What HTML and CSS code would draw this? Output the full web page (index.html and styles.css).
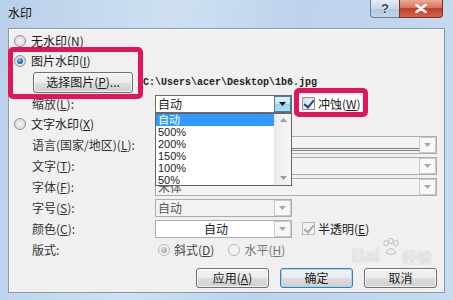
FILE: index.html
```html
<!DOCTYPE html>
<html lang="zh-CN">
<head>
    <meta charset="UTF-8">
    <title>水印</title>
    <link rel="stylesheet" href="styles.css">
</head>
<body>
    <div class="window">
        <div class="titlebar">
            <span class="title">水印</span>
            <div class="caption-buttons">
                <div class="cap-btn help">?</div>
                <div class="cap-btn close">
                    <svg width="12" height="9" viewBox="0 0 12 9"><path d="M1.5 1 L10.5 8 M10.5 1 L1.5 8" stroke="#fff" stroke-width="2.6" stroke-linecap="round"/></svg>
                </div>
            </div>
        </div>

        <div class="client">
            <div class="opt-row">
                <span class="radio"></span>
                <span>无水印(<u>N</u>)</span>
            </div>
            <div class="opt-row">
                <span class="radio checked"></span>
                <span>图片水印(<u>I</u>)</span>
            </div>
            <div class="pic-row">
                <div class="btn pick"><span>选择图片(<u>P</u>)...</span></div>
                <span class="path">C:\Users\acer\Desktop\1b6.jpg</span>
            </div>
            <div class="field-row">
                <span class="label">缩放(<u>L</u>):</span>
                <div class="combo short focus">
                    <span class="combo-text">自动</span>
                    <span class="combo-btn"><svg width="7" height="4" viewBox="0 0 7 4"><path d="M0 0 H7 L3.5 4 Z" fill="#1a1a1a"/></svg></span>
                </div>
                <label class="check washout"><span class="box on"></span><span>冲蚀(<u>W</u>)</span></label>
            </div>
            <div class="opt-row">
                <span class="radio"></span>
                <span>文字水印(<u>X</u>)</span>
            </div>
            <div class="field-row">
                <span class="label">语言(国家/地区)(<u>L</u>):</span>
                <div class="combo long off">
                    <span class="combo-text"><span class="rule"></span></span>
                    <span class="combo-btn"><svg width="7" height="4" viewBox="0 0 7 4"><path d="M0 0 H7 L3.5 4 Z" fill="#a8a8a8"/></svg></span>
                </div>
            </div>
            <div class="field-row">
                <span class="label">文字(<u>T</u>):</span>
                <div class="combo long off">
                    <span class="combo-text"></span>
                    <span class="combo-btn"><svg width="7" height="4" viewBox="0 0 7 4"><path d="M0 0 H7 L3.5 4 Z" fill="#a8a8a8"/></svg></span>
                </div>
            </div>
            <div class="field-row">
                <span class="label">字体(<u>F</u>):</span>
                <div class="combo long off">
                    <span class="combo-text">宋体</span>
                    <span class="combo-btn"><svg width="7" height="4" viewBox="0 0 7 4"><path d="M0 0 H7 L3.5 4 Z" fill="#a8a8a8"/></svg></span>
                </div>
            </div>
            <div class="field-row">
                <span class="label">字号(<u>S</u>):</span>
                <div class="combo short off">
                    <span class="combo-text">自动</span>
                    <span class="combo-btn"><svg width="7" height="4" viewBox="0 0 7 4"><path d="M0 0 H7 L3.5 4 Z" fill="#a8a8a8"/></svg></span>
                </div>
            </div>
            <div class="field-row">
                <span class="label">颜色(<u>C</u>):</span>
                <div class="combo short color">
                    <span class="combo-text center">自动</span>
                    <span class="combo-btn"><svg width="7" height="4" viewBox="0 0 7 4"><path d="M0 0 H7 L3.5 4 Z" fill="#a8a8a8"/></svg></span>
                </div>
                <label class="check"><span class="box on dim"></span><span>半透明(<u>E</u>)</span></label>
            </div>
            <div class="field-row">
                <span class="label">版式:</span>
                <div class="layout-opts">
                    <span class="opt"><span class="radio checked dim"></span><span>斜式(<u>D</u>)</span></span>
                    <span class="opt"><span class="radio dim"></span><span>水平(<u>H</u>)</span></span>
                </div>
            </div>
            <div class="btn-row">
                <div class="btn"><span>应用(<u>A</u>)</span></div>
                <div class="btn default">确定</div>
                <div class="btn">取消</div>
            </div>
        </div>

        <!-- open list of the 缩放 combo -->
        <div class="drop-list">
            <div class="items">
                <div class="item sel">自动</div>
                <div class="item">500%</div>
                <div class="item">200%</div>
                <div class="item">150%</div>
                <div class="item">100%</div>
                <div class="item">50%</div>
            </div>
            <div class="vscroll">
                <svg width="7" height="4" viewBox="0 0 7 4"><path d="M0 4 H7 L3.5 0 Z" fill="#9a9a9a"/></svg>
                <svg width="7" height="4" viewBox="0 0 7 4"><path d="M0 0 H7 L3.5 4 Z" fill="#9a9a9a"/></svg>
            </div>
        </div>

        <!-- annotation marks -->
        <div class="mark mark-pic"></div>
        <div class="mark mark-washout"></div>

        <div class="stamp">
            <span class="stamp-bai">Bai</span>
            <svg class="paw" width="20" height="18" viewBox="0 0 20 18">
                <g fill="none" stroke="rgba(150,150,150,0.55)" stroke-width="1">
                    <ellipse cx="5" cy="5" rx="2.2" ry="2.8"/>
                    <ellipse cx="10" cy="3" rx="2.2" ry="2.8"/>
                    <ellipse cx="15" cy="5" rx="2.2" ry="2.8"/>
                    <path d="M5 15 Q10 6 15 15 Q10 18 5 15 Z"/>
                </g>
            </svg>
            <span class="stamp-jy">经验</span>
        </div>
    </div>
</body>
</html>
```

FILE: styles.css
```css
* {
    box-sizing: border-box;
}

body {
    margin: 0;
    font-family: "Noto Sans CJK SC", "Liberation Sans", sans-serif;
    font-size: 12px;
    color: #1c1c1c;
}

u {
    text-decoration: underline;
    text-underline-offset: 1px;
}

.window {
    position: relative;
    width: 453px;
    height: 300px;
    padding: 0 8px 7px;
    display: flex;
    flex-direction: column;
    background: linear-gradient(100deg, #b9d0ea 0%, #cfe0f2 35%, #bdd3ec 60%, #c7dbef 100%);
    overflow: hidden;
}

/* title bar */
.titlebar {
    height: 28px;
    display: flex;
    justify-content: space-between;
    align-items: flex-start;
}

.title {
    margin-top: 5px;
    line-height: 16px;
    color: #111;
}

.caption-buttons {
    display: flex;
    margin-right: 2px;
}

.cap-btn {
    height: 18px;
    display: flex;
    align-items: center;
    justify-content: center;
    border: 1px solid #6b7c95;
    border-top: none;
}

.help {
    width: 29px;
    border-radius: 0 0 0 4px;
    border-right: none;
    background: linear-gradient(#e4edf7, #c8d7ea 50%, #b3c6de 51%, #c3d5ea);
    color: #3a4a60;
    font-family: "Liberation Sans", sans-serif;
    font-weight: bold;
    font-size: 13px;
    text-shadow: 0 0 2px #fff;
}

.close {
    width: 44px;
    border-radius: 0 0 4px 0;
    border-color: #7c3128;
    background: linear-gradient(#e9a99b, #d5735f 45%, #c33f28 50%, #d3654c);
}

/* client area */
.client {
    flex: 1;
    display: flex;
    flex-direction: column;
    padding-top: 2px;
    background: #f0f0f0;
    border: 1px solid #8799b1;
    box-shadow: inset 1px 1px 0 #fff;
}

.opt-row {
    height: 20px;
    display: flex;
    align-items: center;
    gap: 5px;
    padding-left: 5px;
    line-height: 14px;
}

.radio {
    width: 12px;
    height: 12px;
    border-radius: 50%;
    border: 1px solid #8e9194;
    background: radial-gradient(circle at 50% 50%, #f6f6f6 0, #e2e2e2 55%, #cfcfcf 100%);
    flex: none;
    position: relative;
}

.radio.checked::after {
    content: "";
    position: absolute;
    left: 2px;
    top: 2px;
    width: 6px;
    height: 6px;
    border-radius: 50%;
    background: radial-gradient(circle at 40% 35%, #8fd0ff 0, #2c7ac6 45%, #0d3a75 100%);
}

.radio.dim {
    border-color: #b8b8b8;
    background: #f2f2f2;
}

.radio.dim.checked::after {
    background: radial-gradient(circle at 40% 35%, #e0e0e0 0, #a6a6a6 70%);
}

.pic-row {
    height: 22px;
    display: flex;
    align-items: center;
    padding-left: 24px;
    gap: 10px;
}

.path {
    font-family: "Liberation Mono", monospace;
    font-size: 10px;
    font-weight: bold;
    color: #222;
    margin-top: 1px;
}

.field-row {
    height: 21px;
    display: flex;
    align-items: center;
    padding-left: 23px;
    line-height: 14px;
}

.label {
    width: 123px;
    flex: none;
    color: #333;
}

/* combo boxes */
.combo {
    height: 18px;
    display: flex;
    border: 1px solid #adadad;
    background: #f3f3f3;
}

.combo.short {
    width: 137px;
}

.combo.long {
    width: 282px;
}

.combo-text {
    flex: 1;
    padding-left: 2px;
    line-height: 16px;
    display: flex;
    flex-direction: column;
    justify-content: flex-end;
    white-space: nowrap;
    overflow: hidden;
}

.combo-text.center {
    align-items: center;
    justify-content: center;
}

.combo-btn {
    width: 17px;
    display: flex;
    align-items: center;
    justify-content: center;
    border: 1px solid #c9c9c9;
    background: #f8f8f8;
}

.combo.off .combo-text {
    color: #555;
}

.rule {
    display: block;
    height: 3px;
    margin: 0 0 2px -2px;
    border-top: 1px solid #7c7c7c;
    border-bottom: 1px solid #7c7c7c;
}

.combo.focus {
    border-color: #6a6a6a;
    background: #fff;
}

.combo.focus .combo-btn {
    border-color: #3c7fb1;
    background: linear-gradient(#e5f3fb, #c4e5f6 50%, #98d1ef 51%, #b0def5);
}

.combo.color {
    background: #fff;
}

/* check boxes */
.check {
    display: flex;
    align-items: center;
    gap: 3px;
    margin-left: 10px;
    line-height: 14px;
}

.check.washout {
    margin-left: 7px;
    padding: 2px 3px;
    background: #fff;
}

.box {
    width: 13px;
    height: 13px;
    border: 1px solid #8f8f8f;
    background: linear-gradient(135deg, #dcdcdc, #fbfbfb);
    position: relative;
}

.box.on::after {
    content: "";
    position: absolute;
    left: 3px;
    top: 0;
    width: 4px;
    height: 8px;
    border: solid #21448c;
    border-width: 0 2px 2px 0;
    transform: rotate(40deg);
}

.box.dim {
    border-color: #b9b9b9;
    background: #f4f4f4;
}

.box.dim::after {
    border-color: #a9a9a9;
}

.layout-opts {
    display: flex;
    gap: 14px;
    padding-left: 3px;
    color: #444;
}

.opt {
    display: flex;
    align-items: center;
    gap: 4px;
}

.opt:last-child {
    color: #777;
}

/* push buttons */
.btn-row {
    margin-top: 8px;
    display: flex;
    justify-content: flex-end;
    gap: 11px;
    padding-right: 7px;
}

.btn {
    width: 73px;
    height: 20px;
    display: flex;
    align-items: center;
    justify-content: center;
    border: 1px solid #707070;
    border-radius: 3px;
    background: linear-gradient(#f3f3f3, #ebebeb 50%, #dddddd 51%, #cfcfcf);
    box-shadow: inset 0 0 0 1px rgba(255, 255, 255, 0.7);
    line-height: 14px;
}

.btn.pick {
    width: 100px;
    height: 21px;
}

.btn.default {
    border-color: #3c7fb1;
    box-shadow: inset 0 0 0 1px #9fd9f4;
}

/* open list */
.drop-list {
    position: absolute;
    left: 155px;
    top: 113px;
    width: 137px;
    height: 73px;
    display: flex;
    background: #fff;
    border: 1px solid #646464;
}

.items {
    flex: 1;
}

.item {
    height: 12px;
    line-height: 12px;
    padding-left: 2px;
    font-family: "Liberation Sans", "Noto Sans CJK SC", sans-serif;
    font-size: 11px;
}

.item.sel {
    background: #3399ff;
    color: #fff;
}

.vscroll {
    width: 17px;
    display: flex;
    flex-direction: column;
    justify-content: space-between;
    align-items: center;
    padding: 4px 0 5px;
    background: linear-gradient(90deg, #ececec, #f7f7f7);
    border-left: 1px solid #e3e3e3;
}

/* red annotation frames */
.mark {
    position: absolute;
    border: 5px solid #e3155a;
    border-radius: 5px;
}

.mark-pic {
    left: 8px;
    top: 47px;
    width: 135px;
    height: 52px;
}

.mark-washout {
    left: 294px;
    top: 88px;
    width: 74px;
    height: 29px;
}

/* faint site stamp */
.stamp {
    position: absolute;
    left: 352px;
    top: 238px;
    display: flex;
    align-items: flex-end;
    gap: 1px;
    color: rgba(255, 255, 255, 0.75);
    text-shadow: 0 0 1px rgba(110, 110, 110, 0.6);
    pointer-events: none;
}

.stamp-bai {
    font-family: "Liberation Sans", sans-serif;
    font-size: 18px;
    font-weight: bold;
    line-height: 20px;
}

.paw {
    margin-bottom: 10px;
}

.stamp-jy {
    font-size: 15px;
    line-height: 18px;
}
```
